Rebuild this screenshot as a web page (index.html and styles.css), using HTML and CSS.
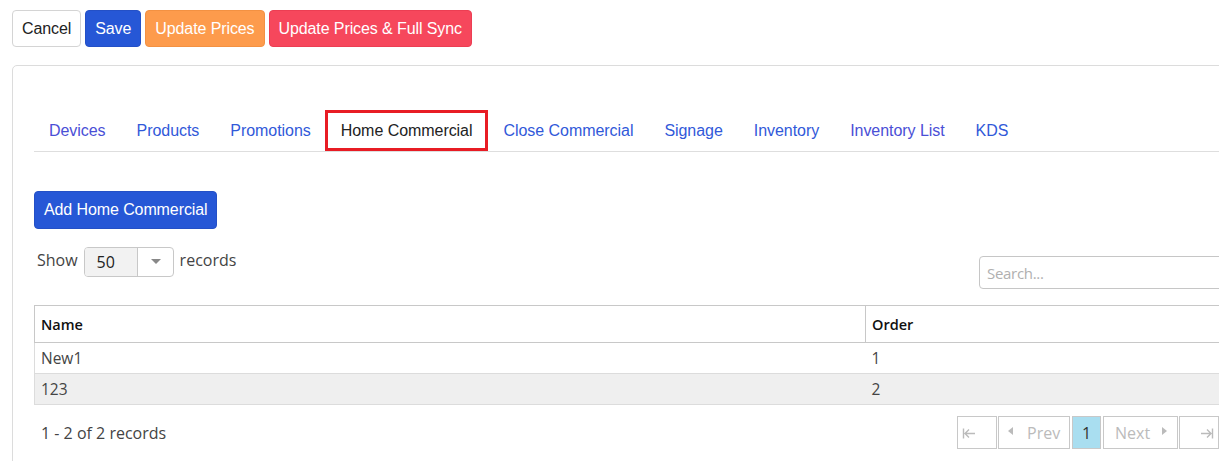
FILE: index.html
```html
<!DOCTYPE html>
<html>
    <head>
        <meta charset="UTF-8">
        <meta name="viewport" content="width=device-width, initial-scale=1.0">
        <title>Home Commercial</title>
        <link rel="stylesheet" href="styles.css">
    </head>
    <body>
        <!-- top action buttons -->
        <div class="toolbar">
            <button class="btn btn-default">Cancel</button>
            <button class="btn btn-primary">Save</button>
            <button class="btn btn-warning">Update Prices</button>
            <button class="btn btn-danger">Update Prices &amp; Full Sync</button>
        </div>

        <div class="panel">
            <ul class="tabs">
                <li><a class="visited" href="#">Devices</a></li>
                <li><a href="#">Products</a></li>
                <li><a href="#">Promotions</a></li>
                <li class="active"><a href="#">Home Commercial</a></li>
                <li><a href="#">Close Commercial</a></li>
                <li><a href="#">Signage</a></li>
                <li><a href="#">Inventory</a></li>
                <li><a class="visited" href="#">Inventory List</a></li>
                <li><a href="#">KDS</a></li>
            </ul>

            <button class="btn btn-primary btn-add">Add Home Commercial</button>

            <div class="grid-top">
                <div class="show">
                    <span class="show-label">Show</span>
                    <div class="select">
                        <span class="select-value">50</span>
                        <span class="select-arrow"></span>
                    </div>
                    <span class="show-label">records</span>
                </div>
                <input class="search" type="text" placeholder="Search...">
            </div>

            <table class="grid">
                <thead>
                    <tr>
                        <th class="col-name">Name</th>
                        <th>Order</th>
                    </tr>
                </thead>
                <tbody>
                    <tr>
                        <td>New1</td>
                        <td>1</td>
                    </tr>
                    <tr class="alt">
                        <td>123</td>
                        <td>2</td>
                    </tr>
                </tbody>
            </table>

            <div class="grid-bottom">
                <span class="info">1 - 2 of 2 records</span>
                <div class="pager">
                    <span class="page page-first">
                        <svg width="14" height="14" viewBox="0 0 14 14"><path d="M1.5 2.5v10M3 7.5h10M7 3.5l-4 4 4 4" fill="none" stroke="#bbb" stroke-width="1.4"/></svg>
                    </span>
                    <span class="page page-prev"><i class="tri-left"></i>Prev</span>
                    <span class="page page-current">1</span>
                    <span class="page page-next">Next<i class="tri-right"></i></span>
                    <span class="page page-last">
                        <svg width="14" height="14" viewBox="0 0 14 14"><path d="M12.5 2.5v10M1 7.5h10M7 3.5l4 4-4 4" fill="none" stroke="#bbb" stroke-width="1.4"/></svg>
                    </span>
                </div>
            </div>
        </div>
    </body>
</html>
```

FILE: styles.css
```css
* {
    box-sizing: border-box;
}

html, body {
    overflow: hidden;
}

body {
    margin: 0;
    padding: 10px 0 0 12px;
    background-color: #fff;
    font-family: "Liberation Sans", Arial, sans-serif;
    font-size: 16px;
    color: #333;
}

/* buttons */
.toolbar {
    display: flex;
    gap: 4px;
}

.btn {
    height: 37px;
    padding: 0 9px;
    border: 1px solid transparent;
    border-radius: 4px;
    font-family: "Liberation Sans", Arial, sans-serif;
    font-size: 16px;
    letter-spacing: -0.1px;
    color: #fff;
    cursor: pointer;
}

.btn-default {
    background-color: #fff;
    border-color: #d4d4d4;
    color: #222;
}

.btn-primary {
    background-color: #2657d6;
    border-color: #2450c6;
}

.btn-warning {
    background-color: #fd9b4c;
    border-color: #f39142;
}

.btn-danger {
    background-color: #f6475c;
    border-color: #ec3e53;
}

/* main panel */
.panel {
    width: 1240px;
    margin-top: 18px;
    padding: 44px 22px 20px 21px;
    border: 1px solid #dcdcdc;
    border-radius: 5px;
}

.tabs {
    display: flex;
    margin: 0;
    padding: 0;
    list-style: none;
    border-bottom: 1px solid #dedede;
}

.tabs li {
    margin-right: 1px;
}

.tabs a {
    display: block;
    height: 41px;
    line-height: 41px;
    padding: 0 15px;
    font-size: 16px;
    letter-spacing: -0.05px;
    color: #3159d9;
    text-decoration: none;
}

.tabs a.visited {
    color: #4a4fd6;
}

.tabs li.active {
    margin-left: -2px;
    margin-right: 0;
}

.tabs li.active a {
    line-height: 35px;
    padding: 0 13px;
    border: 3px solid #e81c24;
    color: #222;
}

.btn-add {
    display: block;
    height: 38px;
    margin-top: 39px;
    padding: 0 9px;
}

/* show / search row */
.grid-top {
    display: flex;
    justify-content: space-between;
    align-items: flex-start;
    margin-top: 18px;
}

.show {
    display: flex;
    align-items: center;
    font-family: "Open Sans", sans-serif;
    font-size: 16px;
    color: #444;
}

.show-label {
    padding: 0 2px 0 3px;
    margin-top: -4px;
}

.select {
    display: flex;
    width: 90px;
    height: 30px;
    margin: 0 3px 0 4px;
    border: 1px solid #c8c8c8;
    border-radius: 4px;
    overflow: hidden;
}

.select-value {
    width: 52px;
    padding: 3px 0 0 12px;
    background-color: #f2f2f2;
    color: #222;
}

.select-arrow {
    flex: 1;
    position: relative;
    border-left: 1px solid #c8c8c8;
}

.select-arrow:after {
    content: "";
    position: absolute;
    left: 13px;
    top: 11px;
    border-left: 5px solid transparent;
    border-right: 5px solid transparent;
    border-top: 5px solid #888;
}

.search {
    width: 250px;
    height: 33px;
    margin-top: 9px;
    padding: 0 7px;
    border: 1px solid #c6c6c6;
    border-radius: 4px;
    font-family: "Open Sans", sans-serif;
    font-size: 15px;
    letter-spacing: -0.3px;
    outline: none;
}

.search::placeholder {
    color: #b0b0b0;
}

/* table */
.grid {
    width: 100%;
    margin-top: 16px;
    border-collapse: collapse;
    font-family: "Open Sans", sans-serif;
    font-size: 15.5px;
}

.grid th {
    height: 37px;
    padding: 0 6px;
    text-align: left;
    font-size: 14.5px;
    font-weight: 600;
    color: #111;
    border-top: 1px solid #c8c8c8;
    border-left: 1px solid #c8c8c8;
    border-bottom: 1px solid #c8c8c8;
}

.grid .col-name {
    width: 831px;
}

.grid td {
    height: 31px;
    padding: 0 6px;
    color: #444;
    border-bottom: 1px solid #dcdcdc;
}

.grid td:first-child {
    border-left: 1px solid #dcdcdc;
}

.grid tr.alt td {
    background-color: #efefef;
}

/* footer */
.grid-bottom {
    display: flex;
    justify-content: space-between;
    align-items: center;
    margin-top: 11px;
    margin-right: 10px;
    font-family: "Open Sans", sans-serif;
}

.info {
    padding-left: 7px;
    font-size: 16px;
    color: #444;
}

.pager {
    display: flex;
}

.page {
    display: flex;
    align-items: center;
    height: 33px;
    border: 1px solid #c8c8c8;
    color: #bbb;
    font-size: 16px;
}

.page-first {
    width: 40px;
    margin-right: 1px;
    padding-left: 4px;
}

.page-prev {
    width: 72px;
    margin-right: 2px;
    padding-left: 9px;
    gap: 14px;
}

.page-current {
    width: 29px;
    margin-right: 2px;
    justify-content: center;
    background-color: #a9def0;
    color: #333;
}

.page-next {
    width: 75px;
    margin-right: 1px;
    padding-left: 11px;
    gap: 12px;
}

.page-last {
    width: 40px;
    justify-content: flex-end;
    padding-right: 4px;
}

.tri-left {
    border-top: 4.5px solid transparent;
    border-bottom: 4.5px solid transparent;
    border-right: 5px solid #bbb;
    margin-top: -4px;
}

.tri-right {
    border-top: 4.5px solid transparent;
    border-bottom: 4.5px solid transparent;
    border-left: 5px solid #bbb;
    margin-top: -4px;
}
```
